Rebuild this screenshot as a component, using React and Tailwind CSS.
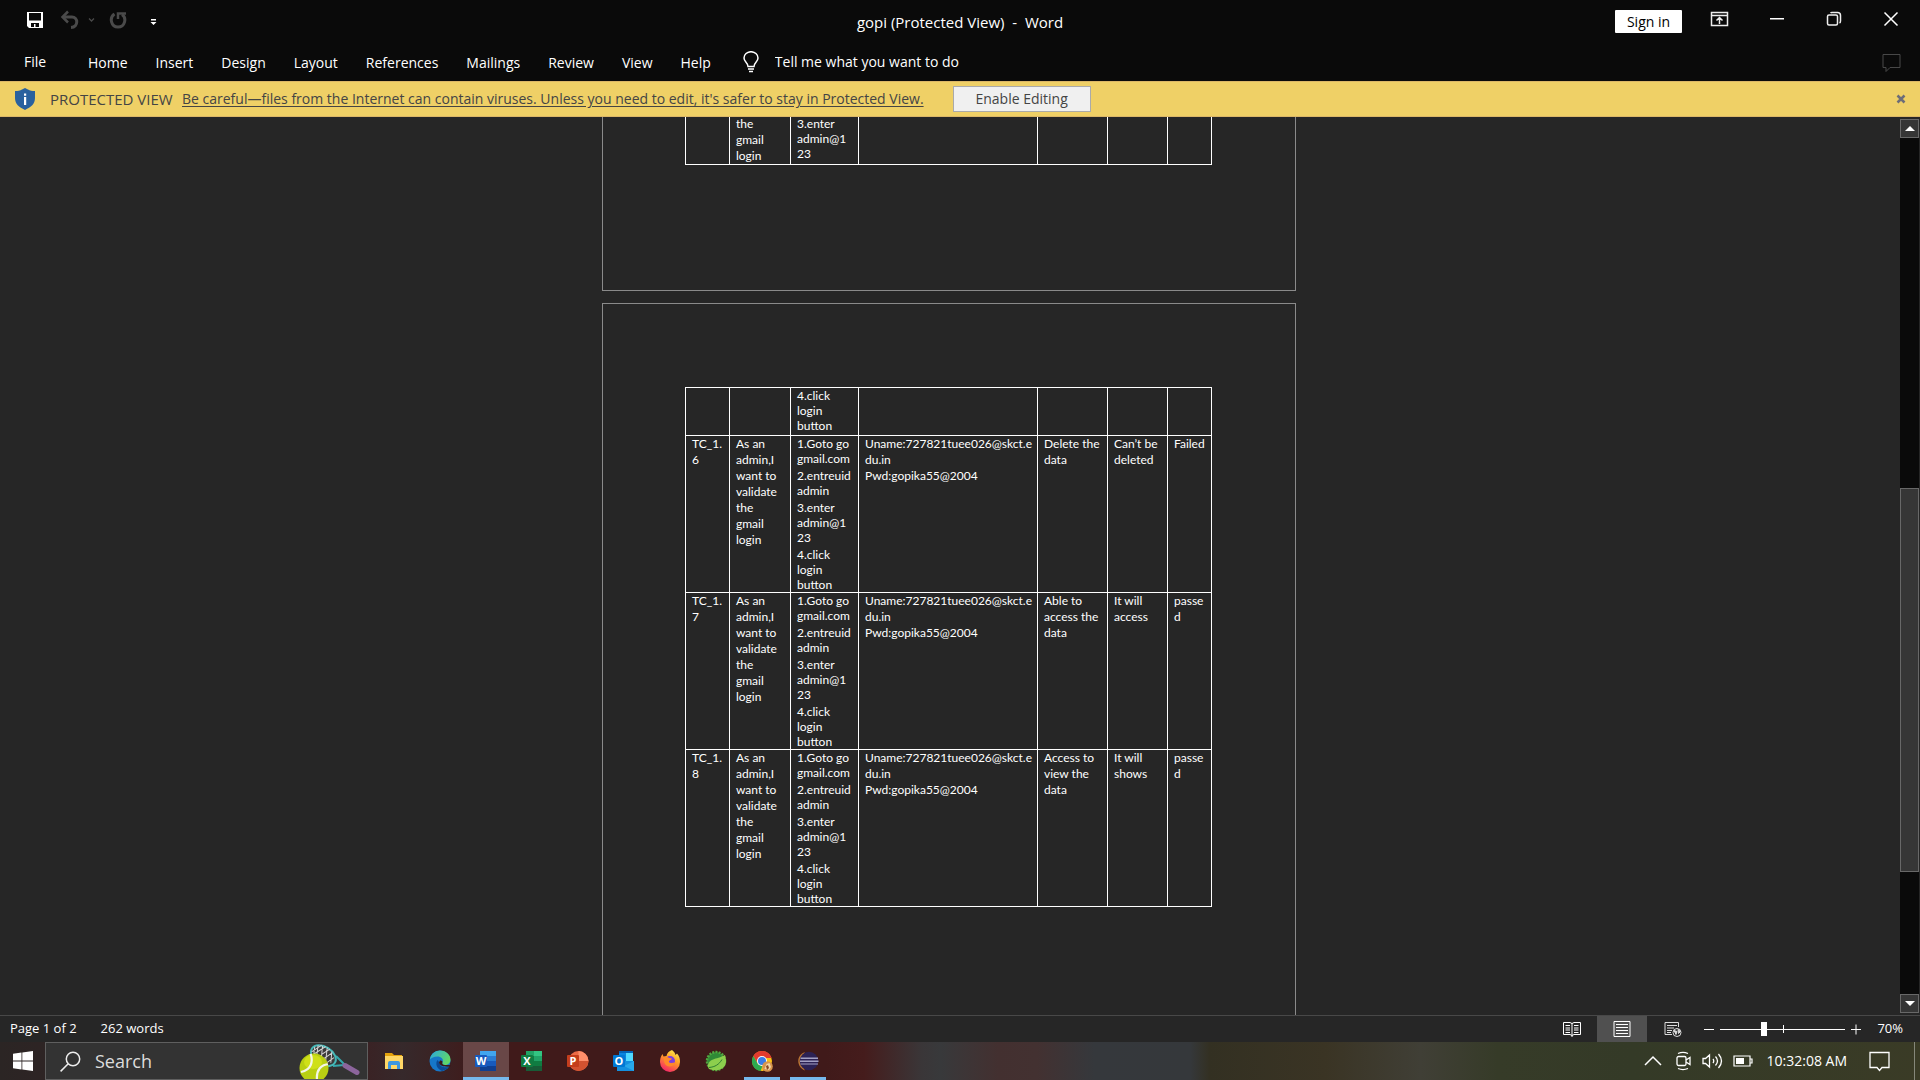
import React from "react";

const TABS = ["Home", "Insert", "Design", "Layout", "References", "Mailings", "Review", "View", "Help"];

const STORY = ["As an", "admin,I", "want to", "validate", "the", "gmail", "login"];
const STEPS = [
  ["1.Goto go", "gmail.com"],
  ["2.entreuid", "admin"],
  ["3.enter", "admin@1", "23"],
  ["4.click", "login", "button"],
];
const DATA = ["Uname:727821tuee026@skct.e", "du.in", "Pwd:gopika55@2004"];

const ROWS = [
  { id: ["TC_1.", "6"], expected: ["Delete the", "data"], actual: ["Can’t be", "deleted"], status: ["Failed"] },
  { id: ["TC_1.", "7"], expected: ["Able to", "access the", "data"], actual: ["It will", "access"], status: ["passe", "d"] },
  { id: ["TC_1.", "8"], expected: ["Access to", "view the", "data"], actual: ["It will", "shows"], status: ["passe", "d"] },
];

function Lines({ items }) {
  return items.map((t, i) => (
    <span key={i} className="block">
      {t}
    </span>
  ));
}

function Cell({ items = [] }) {
  return (
    <td className="border border-white p-0 pl-1.5 align-top leading-4 whitespace-nowrap">
      <Lines items={items} />
    </td>
  );
}

function StepsCell({ steps }) {
  return (
    <td className="border border-white p-0 pl-1.5 align-top leading-[15px] whitespace-nowrap">
      <div className="flex flex-col gap-0.5">
        {steps.map((s, i) => (
          <p key={i}>
            <Lines items={s} />
          </p>
        ))}
      </div>
    </td>
  );
}

function Columns() {
  return (
    <colgroup>
      <col className="w-[44px]" />
      <col className="w-[61px]" />
      <col className="w-[68px]" />
      <col className="w-[179px]" />
      <col className="w-[70px]" />
      <col className="w-[60px]" />
      <col className="w-[44px]" />
    </colgroup>
  );
}

function TitleBar() {
  return (
    <header className="grid h-[42px] grid-cols-[1fr_auto_1fr] items-start">
      <div className="flex items-center pt-2.5 pl-[26px]">
        <button aria-label="Save" className="mr-4">
          <svg width="18" height="20" viewBox="0 0 18 20">
            <path d="M1 2h16v16H3l-2-2z" fill="#fff" />
            <path d="M3 3h12v7.500H3zM5 13h8v4H9.500v-3H8v3H5z" fill="#0a0a0a" />
          </svg>
        </button>
        <button aria-label="Undo" className="mr-2">
          <svg width="20" height="20" viewBox="0 0 20 20" fill="none" stroke="#4a4a4a" strokeWidth="3">
            <path d="M3 7h9c6 0 7 10-1 10.500" />
            <path d="M8 1.500L2.500 7 8 12.500" strokeWidth="2.500" />
          </svg>
        </button>
        <button aria-label="Undo history" className="mr-3.5">
          <svg width="7" height="20" viewBox="0 0 7 20" fill="none" stroke="#4a4a4a" strokeWidth="1.300">
            <path d="M1 8.500l2.500 2.500L6 8.500" />
          </svg>
        </button>
        <button aria-label="Repeat" className="mr-[23px]">
          <svg width="18" height="20" viewBox="0 0 18 20" fill="none" stroke="#4a4a4a" strokeWidth="3">
            <path d="M5.500 4C0 7.500 2 17 9 17s9-9 4-12.500" />
            <path d="M9 9V3.500h8" strokeWidth="2.500" />
          </svg>
        </button>
        <button aria-label="Customize Quick Access Toolbar">
          <svg width="7" height="20" viewBox="0 0 7 20">
            <path d="M1 9h5v1.500H1zM0.500 12h6l-3 3z" fill="#fff" />
          </svg>
        </button>
      </div>
      <h1 className="pt-3 text-[15px] leading-5 whitespace-pre">gopi (Protected View)  -  Word</h1>
      <div className="flex items-start justify-end pr-[21px]">
        <button className="mt-2.5 mr-7 h-[23px] w-[67px] rounded-[1px] bg-white text-sm leading-[23px] text-black">Sign in</button>
        <button aria-label="Ribbon Display Options" className="mt-2.5 mr-10">
          <svg width="19" height="18" viewBox="0 0 19 18" fill="none" stroke="#eee" strokeWidth="1.500">
            <path d="M1.500 2.500h16v13h-16zM1.500 5.500h16M9.500 14V8M6.500 10.500l3-3 3 3" />
          </svg>
        </button>
        <button aria-label="Minimize" className="mt-2.5 mr-[41px]">
          <svg width="16" height="18" viewBox="0 0 16 18">
            <path d="M1 8h14v1.500H1z" fill="#fff" />
          </svg>
        </button>
        <button aria-label="Restore Down" className="mt-2.5 mr-[41px]">
          <svg width="16" height="18" viewBox="0 0 16 18" fill="none" stroke="#eee" strokeWidth="1.500">
            <rect x="1.500" y="5" width="10" height="10" rx="1.500" />
            <path d="M4.500 3Q5 2.500 6 2.500h5.500q3 0 3 3V11q0 1.500-1 2" />
          </svg>
        </button>
        <button aria-label="Close" className="mt-2.5">
          <svg width="16" height="18" viewBox="0 0 16 18" stroke="#fff" strokeWidth="1.500">
            <path d="M1.500 2.500l13 13M14.500 2.500l-13 13" />
          </svg>
        </button>
      </div>
    </header>
  );
}

function Ribbon() {
  return (
    <div className="flex h-[39px] items-center text-sm leading-5">
      <button className="w-16 pl-6 text-left">File</button>
      <nav className="ml-6 flex gap-7 pt-0.5">
        {TABS.map((t) => (
          <button key={t}>{t}</button>
        ))}
      </nav>
      <label className="ml-8 flex flex-1 items-center gap-4">
        <svg width="16" height="22" viewBox="0 0 16 22" fill="none" stroke="#fff" strokeWidth="1.500">
          <path d="M5 15.500c0-4-4-4.500-4-8.500a7 6.300 0 0 1 14 0c0 4-4 4.500-4 8.500zM5 18h6M6 20.500h4" />
        </svg>
        <input aria-label="Tell me what you want to do" placeholder="Tell me what you want to do" className="w-60 bg-transparent outline-none placeholder:text-white" />
      </label>
      <button aria-label="Comments" className="mr-[19px]">
        <svg width="19" height="20" viewBox="0 0 19 20" fill="none" stroke="#484848">
          <path d="M1 2.500h17v13H8l-4 4v-4H1z" />
        </svg>
      </button>
    </div>
  );
}

function ProtectedBar() {
  return (
    <div className="flex h-9 items-center border-y border-[#dcb767] bg-[#efd066] text-sm leading-5 text-[#444]">
      <svg className="ml-[15px]" width="20" height="22" viewBox="0 0 20 22">
        <path d="M10 0l3 1.500c2 1 4 1.500 7 1.500v7c0 6-4 9-10 12C4 19 0 16 0 10V3c3 0 5-.5 7-1.500z" fill="#29619e" />
        <path d="M9 5.500h2.200v2.200H9zM9 9h2.200v8H9z" fill="#fff" />
      </svg>
      <span className="ml-[15px] w-[132px] text-[15px]">PROTECTED VIEW</span>
      <a href="#protected" className="underline underline-offset-2">
        Be careful—files from the Internet can contain viruses. Unless you need to edit, it's safer to stay in Protected View.
      </a>
      <button className="ml-[29px] h-[26px] w-[138px] border border-[#aaa] bg-[#f0f0f0]">Enable Editing</button>
      <button aria-label="Close message bar" className="mr-[14px] ml-auto">
        <svg width="10" height="10" viewBox="0 0 10 10" stroke="#6d6d78" strokeWidth="2.500">
          <path d="M1.500 1.500l7 7M8.500 1.500l-7 7" />
        </svg>
      </button>
    </div>
  );
}

function Document() {
  return (
    <main className="flex min-h-0 flex-1 bg-[#262626]">
      <div className="flex min-w-0 flex-1 flex-col items-center overflow-hidden pr-0.5 font-[Lato,sans-serif] text-xs">
        <section className="w-[694px] shrink-0 border-x border-b border-[#8a8a8a] pb-[125px]">
          <table className="-mt-0.5 ml-[82px] w-[527px] table-fixed border-collapse">
            <Columns />
            <tbody>
              <tr>
                <Cell />
                <Cell items={["the", "gmail", "login"]} />
                <StepsCell steps={[["3.enter", "admin@1", "23"]]} />
                <Cell />
                <Cell />
                <Cell />
                <Cell />
              </tr>
            </tbody>
          </table>
        </section>
        <section className="mt-3 min-h-[900px] w-[694px] shrink-0 border border-[#8a8a8a] pt-[83px]">
          <table className="ml-[82px] w-[527px] table-fixed border-collapse">
            <Columns />
            <tbody>
              <tr className="h-12">
                <Cell />
                <Cell />
                <StepsCell steps={[["4.click", "login", "button"]]} />
                <Cell />
                <Cell />
                <Cell />
                <Cell />
              </tr>
              {ROWS.map((r) => (
                <tr key={r.id[1]}>
                  <Cell items={r.id} />
                  <Cell items={STORY} />
                  <StepsCell steps={STEPS} />
                  <Cell items={DATA} />
                  <Cell items={r.expected} />
                  <Cell items={r.actual} />
                  <Cell items={r.status} />
                </tr>
              ))}
            </tbody>
          </table>
        </section>
      </div>
      <div className="flex w-5 flex-col bg-[#262626] py-0.5 pr-px">
        <button aria-label="Scroll up" className="flex h-[19px] items-center justify-center border border-[#686868] bg-[#363636]">
          <svg width="10" height="5" viewBox="0 0 10 5">
            <path d="M0 5l5-5 5 5z" fill="#fff" />
          </svg>
        </button>
        <div className="flex flex-1 flex-col bg-[#0a0a0a]">
          <div className="flex-[351]" />
          <div className="flex-[383] border border-[#686868] bg-[#363636]" />
          <div className="flex-[122]" />
        </div>
        <button aria-label="Scroll down" className="flex h-[19px] items-center justify-center border border-[#686868] bg-[#363636]">
          <svg width="10" height="5" viewBox="0 0 10 5">
            <path d="M0 0l5 5 5-5z" fill="#fff" />
          </svg>
        </button>
      </div>
    </main>
  );
}

function StatusBar() {
  return (
    <footer className="flex h-[27px] items-center border-t border-[#484848] bg-[#262626] text-[13px]">
      <button className="ml-2.5">Page 1 of 2</button>
      <button className="ml-6">262 words</button>
      <div className="ml-auto flex h-full items-center">
        <button aria-label="Read Mode" className="flex h-full w-[50px] items-center justify-center">
          <svg width="18" height="16" viewBox="0 0 18 16" fill="none" stroke="#fff">
            <path d="M.5 1.500H7l2 1 2-1h6.500v12H11l-2 1-2-1H.500zM9 2v14" />
            <path d="M2.500 4.500H7M2.500 7H7M2.500 9H7M2.500 11.500H7M11 4.500h4.500M11 7h4.500M11 9h4.500M11 11.500h4.500" />
          </svg>
        </button>
        <button aria-label="Print Layout" className="flex h-full w-[50px] items-center justify-center bg-[#505050]">
          <svg width="18" height="16" viewBox="0 0 18 16" fill="none" stroke="#fff">
            <path d="M1 .5h16v15H1zM3 3.500h12M3 6.500h12M3 9.500h12M3 12.500h12" />
          </svg>
        </button>
        <button aria-label="Web Layout" className="flex h-full w-[51px] items-center justify-center">
          <svg width="18" height="16" viewBox="0 0 18 16" fill="none" stroke="#ddd">
            <path d="M14.500 6V1.500H1v12h7M3 4.500h10M3 7h7M3 9.500h5M3 11.500h4" />
            <circle cx="13" cy="11.500" r="4" fill="#262626" />
            <path d="M10 9.500l3 1-1 3zM14 8.500l2.500 2-2 2z" fill="#ddd" />
          </svg>
        </button>
        <button aria-label="Zoom out" className="ml-1.5">
          <svg width="10" height="11" viewBox="0 0 10 11" stroke="#fff">
            <path d="M0 5.500h10" />
          </svg>
        </button>
        <div className="relative ml-1.5 flex items-center">
          <span className="absolute left-1/2 h-2 w-px bg-white" />
          <input
            type="range"
            aria-label="Zoom"
            defaultValue="34"
            className="relative h-px w-[125px] appearance-none bg-white [&::-webkit-slider-thumb]:h-3.5 [&::-webkit-slider-thumb]:w-1.5 [&::-webkit-slider-thumb]:appearance-none [&::-webkit-slider-thumb]:bg-white"
          />
        </div>
        <button aria-label="Zoom in" className="ml-1.5">
          <svg width="10" height="11" viewBox="0 0 10 11" stroke="#fff">
            <path d="M0 5.500h10M5 .5v10" />
          </svg>
        </button>
        <button className="mr-[17px] ml-4">70%</button>
      </div>
    </footer>
  );
}

const Office = ({ letter, tile, children }) => (
  <svg width="22" height="22" viewBox="0 0 22 22">
    {children}
    <rect x="0" y="5" width="12" height="12" rx="1" fill={tile} />
    <text x="6" y="15" textAnchor="middle" fontSize="11" fontWeight="700" fill="#fff" fontFamily="Open Sans, sans-serif">
      {letter}
    </text>
  </svg>
);

const APPS = [
  {
    name: "File Explorer",
    icon: (
      <svg width="20" height="20" viewBox="0 0 20 20">
        <path d="M1 2h7l2 2h8v4H1z" fill="#e5a20c" />
        <path d="M1 5h18v13H1z" fill="#ffd766" />
        <path d="M4 18v-6q0-2 2-2h8q2 0 2 2v6h-3v-4H7v4z" fill="#3d97e0" />
      </svg>
    ),
  },
  {
    name: "Microsoft Edge",
    icon: (
      <svg width="22" height="22" viewBox="0 0 22 22">
        <defs>
          <linearGradient id="edgeTop" x1="0" y1="0" x2="1" y2="0.4">
            <stop offset="0" stopColor="#2aa7e0" />
            <stop offset="1" stopColor="#5fd66a" />
          </linearGradient>
        </defs>
        <circle cx="11" cy="11" r="10.500" fill="#1677c9" />
        <path d="M.8 9.500C2 3.500 6.500.5 11 .5c6.500 0 10.500 4.800 10.500 9 0 4-3 5.500-5.500 5.500-2 0-3.500-1-2.500-2.500C15 9 12 6.500 8.500 6.500 5 6.500 2 8 .8 9.500z" fill="url(#edgeTop)" />
        <path d="M8.500 10c-2.500 3-1 9 4.500 11 3-.5 6-2.500 7.500-4.500-4.500 2-10 .5-10-4z" fill="#0c4a94" />
        <path d="M11 10.500c1.500 0 2.500.5 2.500 1.500-.8 1.500 0 3 2.500 3h6v1.500c-6 .5-11 0-12-4z" fill="#3b1a1c" />
      </svg>
    ),
  },
  {
    name: "Word",
    active: true,
    icon: (
      <Office letter="W" tile="#185abd">
        <path d="M5 1h16v5H5z" fill="#41a5ee" />
        <path d="M5 6h16v5H5z" fill="#2b7cd3" />
        <path d="M5 11h16v5H5z" fill="#185abd" />
        <path d="M5 16h16v5H5z" fill="#103f91" />
      </Office>
    ),
  },
  {
    name: "Excel",
    icon: (
      <Office letter="X" tile="#107c41">
        <path d="M5 1h8v5H5z" fill="#21a366" />
        <path d="M13 1h8v5h-8z" fill="#33c481" />
        <path d="M5 6h8v10H5z" fill="#107c41" />
        <path d="M13 6h8v5h-8z" fill="#21a366" />
        <path d="M13 11h8v5h-8z" fill="#107c41" />
        <path d="M5 16h16v5H5z" fill="#185c37" />
      </Office>
    ),
  },
  {
    name: "PowerPoint",
    icon: (
      <Office letter="P" tile="#c43e1c">
        <circle cx="11.500" cy="11" r="10" fill="#ed6c47" />
        <path d="M11.500 1a10 10 0 0 1 10 10h-10z" fill="#ff8f6b" />
        <path d="M1.500 11h20a10 10 0 0 1-20 0z" fill="#d35230" />
      </Office>
    ),
  },
  {
    name: "Outlook",
    icon: (
      <Office letter="O" tile="#0078d4">
        <path d="M6 1h14v4H6z" fill="#0364b8" />
        <path d="M6 3h7v9H6z" fill="#0a84e0" />
        <path d="M13 3h7v9h-7z" fill="#50d9ff" />
        <path d="M4 11h17v10H4z" fill="#1490df" />
        <path d="M21 11v10l-10-5z" fill="#28a8ea" />
      </Office>
    ),
  },
  {
    name: "Firefox",
    icon: (
      <svg width="22" height="22" viewBox="0 0 22 22">
        <defs>
          <linearGradient id="fox" x1="0.8" y1="0" x2="0.3" y2="1">
            <stop offset="0" stopColor="#fff04a" />
            <stop offset="0.45" stopColor="#ff9a28" />
            <stop offset="1" stopColor="#f5226a" />
          </linearGradient>
        </defs>
        <path d="M13 0c2 1.500 3 3 3.500 5l1.500-1.500c2.500 3 3 5 3 8.500a10 10 0 0 1-20 0c0-3 .5-5 2.500-8l1 2.500L7.500 6C8 3 10 1 13 0z" fill="url(#fox)" />
        <circle cx="11" cy="11" r="5" fill="#7b3fe0" />
        <path d="M5 7.500c2-1 4-.5 5 .5l3 .5c-.5 1.500-2.500 1.500-3 2.500s.5 2 2 2c1.500.2 3-.8 4.500-.5-1 3-4 4-6 4-4 0-6-3.500-5.500-9z" fill="#ff8a2a" />
      </svg>
    ),
  },
  {
    name: "Spring Tool Suite",
    icon: (
      <svg width="22" height="22" viewBox="0 0 22 22">
        <circle cx="11" cy="11" r="9" fill="#2f8a36" stroke="#4fa83f" strokeWidth="2.500" strokeDasharray="2 1.200" />
        <path d="M3 17C3 8 11 10 20 5c2 7 1 11-3 13.500-4 2.500-8 2-13 .5z" fill="#8ccf4d" />
        <path d="M4 17.500c6-.5 10-3 13-8" stroke="#2e7d32" fill="none" />
      </svg>
    ),
  },
  {
    name: "Google Chrome",
    running: true,
    icon: (
      <svg width="22" height="22" viewBox="0 0 22 22">
        <circle cx="11" cy="11" r="10" fill="#fbc116" />
        <path d="M2.300 6a10 10 0 0 1 17.400 0l.8 2H11L6.500 13z" fill="#e33b2e" />
        <path d="M2.300 6L7 14l4.500 2-2 5A10 10 0 0 1 2.300 6z" fill="#2da94f" />
        <circle cx="11" cy="11" r="5" fill="#fff" />
        <circle cx="11" cy="11" r="4" fill="#3a7de8" />
        <circle cx="16.500" cy="16.500" r="5.300" fill="#d8954c" />
        <path d="M13.500 19l2-5 3-1 1.500 4-2 3z" fill="#f2d5a8" />
        <path d="M15 16l2-1 1 3-2 2z" fill="#8c4b22" />
      </svg>
    ),
  },
  {
    name: "Eclipse",
    running: true,
    icon: (
      <svg width="22" height="22" viewBox="0 0 22 22">
        <path d="M8 2C-1 5-1 17 8 20.500 4 15 4 7 8 2z" fill="#b87333" />
        <circle cx="12" cy="11" r="9.300" fill="#2c2255" />
        <path d="M3.500 7.500h17.500v1.500h-17.500zM3 10.500h18.500v1.500h-18.500zM3.500 13.500h17.500v1h-17.500z" fill="#a3a0c4" />
      </svg>
    ),
  },
];

function Taskbar() {
  return (
    <div className="flex h-[38px] items-stretch bg-[linear-gradient(90deg,#2b2524_0%,#2d2424_2%,#3a2224_19%,#36292b_21%,#401a1a_25%,#401a1a_43%,#451c1c_45%,#3a3638_48%,#38393b_49%,#433030_52%,#433131_54%,#35383c_57%,#35383b_62%,#333022_63%,#3a3424_69%,#403f36_74%,#363b28_78%,#343a27_85%,#3a3b26_100%)]">
      <button aria-label="Start" className="flex w-[45px] items-center justify-center">
        <svg width="20" height="20" viewBox="0 0 20 20" fill="#fff">
          <path d="M0 2.800l8.500-1.200v8H0zM9.300 1.400L20 0v9.600H9.300zM0 10.400h8.500v8L0 17.200zM9.300 10.400H20V20L9.300 18.600z" />
        </svg>
      </button>
      <label className="flex w-[323px] items-center border border-[#5f5f5f] bg-[#333] pl-3.5">
        <svg width="21" height="21" viewBox="0 0 21 21" fill="none" stroke="#eee" strokeWidth="1.500">
          <circle cx="13" cy="8" r="6.700" />
          <path d="M8.200 12.800L.6 20.400" />
        </svg>
        <input aria-label="Search" placeholder="Search" className="ml-3.5 w-40 bg-transparent text-lg outline-none placeholder:text-[#dcdcdc]" />
        <svg className="mr-1.5 ml-auto self-end" width="62" height="36" viewBox="0 0 62 36">
          <path d="M34 23l11-1M37 13l9 9" stroke="#35a9ad" strokeWidth="2" fill="none" />
          <path d="M46 22.500l12 7" stroke="#8c659c" strokeWidth="5" strokeLinecap="round" />
          <g transform="rotate(32 23 13)">
            <ellipse cx="24" cy="12" rx="13.500" ry="9" fill="#3a3a3a" stroke="#45b8b8" strokeWidth="2" />
            <path d="M12 9l5 11M14 6l7 15M18 4l8 16M23 3l7 15M29 4l5 10M12 15L17 4M14 18l7-15M18 20l8-17M23 21l7-16M29 20l5-12" stroke="#d5d5d5" strokeWidth="1" />
          </g>
          <clipPath id="ballClip">
            <circle cx="15" cy="25" r="14.500" />
          </clipPath>
          <circle cx="15" cy="25" r="14.500" fill="#b9cf12" />
          <g clipPath="url(#ballClip)" fill="none">
            <ellipse cx="14" cy="19" rx="9" ry="7" fill="#cfe018" />
            <path d="M11 9c4 10 1 18-9 20M31 21c-9 0-14 6-13 16" stroke="#f4f6e8" strokeWidth="2.200" />
          </g>
        </svg>
      </label>
      <div className="ml-[3px] flex">
        {APPS.map((a) => (
          <button
            key={a.name}
            aria-label={a.name}
            className={
              a.active
                ? "flex w-[46px] items-center justify-center border-b-3 border-[#76b9ed] bg-[#694747] pt-[3px]"
                : "relative flex w-[46px] items-center justify-center"
            }
          >
            {a.icon}
            {a.running && <span className="absolute inset-x-[5px] bottom-0 h-[3px] bg-[#76b9ed]" />}
          </button>
        ))}
      </div>
      <div className="ml-auto flex items-center">
        <button aria-label="Show hidden icons">
          <svg width="18" height="12" viewBox="0 0 18 12" fill="none" stroke="#fff" strokeWidth="1.500">
            <path d="M1 10l8-8 8 8" />
          </svg>
        </button>
        <button aria-label="Meet Now" className="ml-3.5">
          <svg width="16" height="20" viewBox="0 0 16 20" fill="none" stroke="#fff" strokeWidth="1.300">
            <rect x="1" y="5.500" width="9" height="9" rx="1.500" />
            <path d="M10 9l4-2.500v7L10 11M2 2.500Q7 .3 12 2.500M2 17.500q5 2.200 10 0" />
          </svg>
        </button>
        <button aria-label="Volume" className="ml-2.5">
          <svg width="21" height="18" viewBox="0 0 21 18" fill="none" stroke="#fff" strokeWidth="1.300">
            <path d="M1 6.500h2.500L7.500 3v12l-4-3.500H1zM11 7q1.500 2 0 4M13.500 4.500q4 4.500 0 9M16.500 2q6 7 0 14" />
          </svg>
        </button>
        <button aria-label="Battery" className="ml-2.5">
          <svg width="20" height="12" viewBox="0 0 20 12" fill="none" stroke="#fff" strokeWidth="1.200">
            <path d="M1 1h16v10H1zM17.500 4h1.500v4h-1.500" />
            <path d="M3 3h8v6H3z" fill="#fff" stroke="none" />
          </svg>
        </button>
        <time className="ml-3.5 text-sm">10:32:08 AM</time>
        <button aria-label="Notifications" className="mr-6 ml-[22px]">
          <svg width="21" height="21" viewBox="0 0 21 21" fill="none" stroke="#fff" strokeWidth="1.300">
            <path d="M1 1.500h19v15h-7l-2.500 3-2.500-3H1z" />
          </svg>
        </button>
        <button aria-label="Show desktop" className="h-[38px] w-1.5 border-l border-[#85877a]" />
      </div>
    </div>
  );
}

export default function App() {
  return (
    <div className="flex h-screen flex-col overflow-hidden bg-[#0a0a0a] font-['Open_Sans','Noto_Sans',sans-serif] text-white">
      <TitleBar />
      <Ribbon />
      <ProtectedBar />
      <Document />
      <StatusBar />
      <Taskbar />
    </div>
  );
}
